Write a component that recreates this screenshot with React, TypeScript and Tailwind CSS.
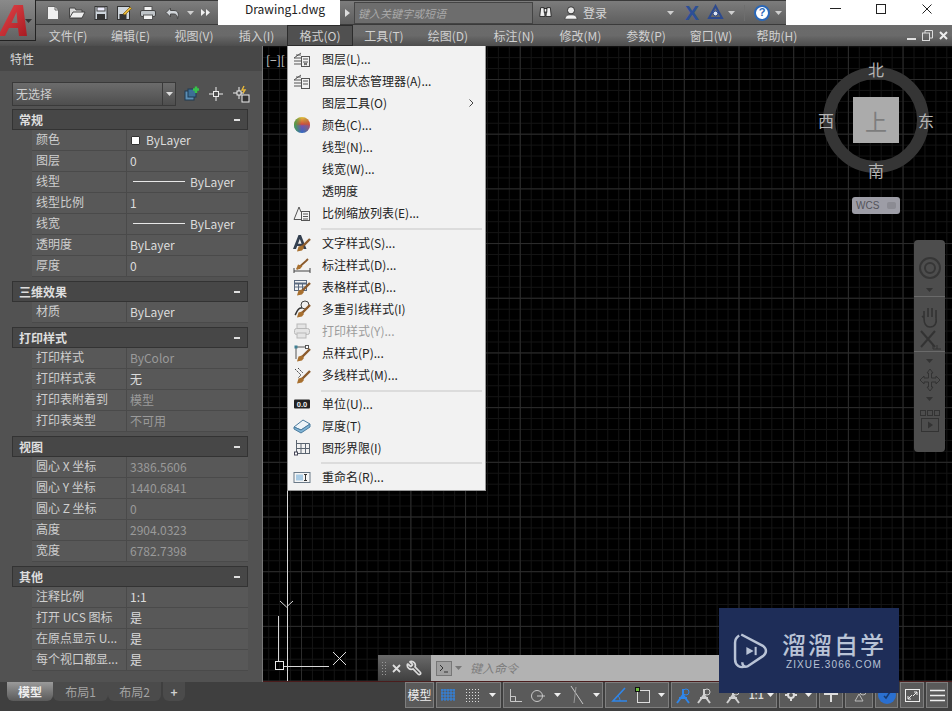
import React from "react";
import { Wrench } from "lucide-react";

const FONT = '"Noto Sans CJK SC", "Liberation Sans", sans-serif';

type Row = { l: string; v?: string; kind?: "color" | "line"; dim?: boolean };
const sections: { t: string; rows: Row[] }[] = [
  { t: "常规", rows: [
    { l: "颜色", v: "ByLayer", kind: "color" }, { l: "图层", v: "0" }, { l: "线型", v: "ByLayer", kind: "line" },
    { l: "线型比例", v: "1" }, { l: "线宽", v: "ByLayer", kind: "line" }, { l: "透明度", v: "ByLayer" }, { l: "厚度", v: "0" } ] },
  { t: "三维效果", rows: [{ l: "材质", v: "ByLayer" }] },
  { t: "打印样式", rows: [
    { l: "打印样式", v: "ByColor", dim: true }, { l: "打印样式表", v: "无" }, { l: "打印表附着到", v: "模型", dim: true }, { l: "打印表类型", v: "不可用", dim: true } ] },
  { t: "视图", rows: [
    { l: "圆心 X 坐标", v: "3386.5606", dim: true }, { l: "圆心 Y 坐标", v: "1440.6841", dim: true }, { l: "圆心 Z 坐标", v: "0", dim: true },
    { l: "高度", v: "2904.0323", dim: true }, { l: "宽度", v: "6782.7398", dim: true } ] },
  { t: "其他", rows: [
    { l: "注释比例", v: "1:1" }, { l: "打开 UCS 图标", v: "是" }, { l: "在原点显示 U...", v: "是" }, { l: "每个视口都显...", v: "是" } ] },
];

const menuNames = [
  ["文件(F)", 62], ["编辑(E)", 63], ["视图(V)", 64], ["插入(I)", 61], ["格式(O)", 66], ["工具(T)", 62],
  ["绘图(D)", 66], ["标注(N)", 66], ["修改(M)", 67], ["参数(P)", 64], ["窗口(W)", 66], ["帮助(H)", 66],
] as const;

const S = ({ children, w = 18, h = 18, vb = "0 0 18 18" }: { children: React.ReactNode; w?: number; h?: number; vb?: string }) => (
  <svg width={w} height={h} viewBox={vb} fill="none" className="shrink-0">{children}</svg>
);

const Brush = () => (
  <g>
    <path d="M9 13 L17 5" stroke="#8a5a2c" strokeWidth="2.4" />
    <path d="M4 17.5 L5.5 12.5 L9 11.5 L11 14 L9 16.5 Z" fill="#a8702f" />
  </g>
);

const LayerIc = ({ lines }: { lines?: boolean }) => (
  <S>
    <g stroke="#555" strokeWidth="1">
      <path d="M1 8 L8 3 M1 8 H8 M1 11 H8 M1 14 H8 M3 5 H8" />
      <rect x="8.5" y="6.5" width="8" height="10" fill="#f2f2f2" />
      <path d="M10 9 H15 M10 12 H15" stroke="#555" />
      {!lines && <path d="M11 13 L14 15 M14 13 L11 15" />}
    </g>
  </S>
);

type MenuIcon = React.ReactNode;
const icons: Record<string, MenuIcon> = {
  layer: <LayerIc />,
  state: <LayerIc lines />,
  color: (
    <S>
      <defs>
        <linearGradient id="cg" x1="0" x2="0" y1="0" y2="1">
          <stop offset="0" stopColor="#e8c23a" /><stop offset="0.45" stopColor="#d8473c" /><stop offset="0.55" stopColor="#7a4fb0" /><stop offset="1" stopColor="#3166c8" />
        </linearGradient>
        <linearGradient id="cg2" x1="0" x2="1" y1="0" y2="0">
          <stop offset="0" stopColor="#3fa64b" /><stop offset="0.5" stopColor="#3fa64b" stopOpacity="0" /><stop offset="1" stopColor="#d8473c" stopOpacity="0.6" />
        </linearGradient>
      </defs>
      <circle cx="9" cy="9" r="8" fill="url(#cg)" />
      <circle cx="9" cy="9" r="8" fill="url(#cg2)" />
    </S>
  ),
  scale: (
    <S>
      <g stroke="#555">
        <path d="M1 15.5 L6 3 L8 8 M1 15.5 H8" />
        <rect x="8.5" y="7.5" width="8" height="9" fill="#f4f4f4" />
        <path d="M10 10 H15 M10 12.5 H15 M10 15 H15" />
      </g>
    </S>
  ),
  text: (
    <S>
      <path d="M0 15 L5.5 1 H8 L13.5 15 H10.5 L9.4 12 H4.2 L3 15 Z M5 9.8 H8.6 L6.8 5 Z" fill="#333f4f" fillRule="evenodd" />
      <Brush />
    </S>
  ),
  dim: (
    <S>
      <path d="M1 12 V17 M17 12 V17 M1 15 H17" stroke="#444" />
      <path d="M4 13 L13 5 L15 3" stroke="#8a5a2c" strokeWidth="1.8" />
      <path d="M3 13.5 L5 8.5 L9.5 10 L7 13 Z" fill="#a8702f" />
    </S>
  ),
  table: (
    <S>
      <rect x="1.5" y="2.5" width="12" height="10" fill="#f3f3f3" stroke="#5a6a80" />
      <path d="M1.5 5.5 H13.5" stroke="#5a6a80" strokeWidth="2" />
      <path d="M5.5 5 V12.5 M9.5 5 V12.5 M1.5 9 H13.5" stroke="#5a6a80" />
      <Brush />
    </S>
  ),
  mleader: (
    <S>
      <circle cx="12" cy="5" r="4" fill="#f0f0f0" stroke="#444" />
      <path d="M9 8 C4 7 4 13 2 15" stroke="#333" strokeWidth="1.5" />
      <Brush />
    </S>
  ),
  plot: (
    <S>
      <g stroke="#b8b8b8" fill="#e4e4e4">
        <rect x="4" y="2" width="9" height="5" />
        <rect x="1.5" y="6.5" width="15" height="6" rx="2" />
        <rect x="4" y="11" width="9" height="5" />
      </g>
    </S>
  ),
  point: (
    <S>
      <path d="M3 3 H14 M3 3 V15" stroke="#555" />
      <rect x="1.5" y="1.5" width="3" height="3" fill="#3e7f92" />
      <rect x="12.5" y="1.5" width="3" height="3" fill="#fff" stroke="#555" />
      <Brush />
    </S>
  ),
  mline: (
    <S>
      <path d="M2 3 L8 9 L5 12 M5 2 L10 7" stroke="#444" strokeDasharray="2 1" />
      <Brush />
    </S>
  ),
  units: (
    <S>
      <rect x="1" y="4.5" width="16" height="9" rx="1" fill="#222" />
      <text x="9" y="12" textAnchor="middle" fontSize="7.5" fill="#eee" fontFamily="Liberation Sans" fontWeight="700">0.0</text>
    </S>
  ),
  thick: (
    <S>
      <path d="M1 10 L10 3 L17 7 L8 13 Z" fill="#eef4f8" stroke="#4d7c9e" />
      <path d="M1 10 V12 L8 16 L17 10 V7 L8 13 Z" fill="#7fb4d6" stroke="#4d7c9e" />
    </S>
  ),
  limits: (
    <S>
      <path d="M3.5 1 V16 M3 14.5 H17 M3.5 4.5 H16.5 V14.5 M8 4.5 V14.5 M12.5 4.5 V14.5 M3.5 9.5 H16.5" stroke="#5a6470" />
      <rect x="1.5" y="13" width="3" height="3" fill="#fff" stroke="#445" />
    </S>
  ),
  rename: (
    <S>
      <rect x="1" y="4.5" width="16" height="10" fill="#f5f5f5" stroke="#6b7a88" />
      <rect x="3" y="6.5" width="7" height="6" fill="#a9cbe4" />
      <path d="M11 6.5 H14 M12.5 6.5 V12.5 M11 12.5 H14" stroke="#333" />
    </S>
  ),
};

type Mi = { t: string; ic?: string; dis?: boolean; arrow?: boolean };
const menuGroups: { items: Mi[]; h: string }[] = [
  { h: "pt-[2px] pb-[4px]", items: [
    { t: "图层(L)...", ic: "layer" }, { t: "图层状态管理器(A)...", ic: "state" }, { t: "图层工具(O)", arrow: true }, { t: "颜色(C)...", ic: "color" },
    { t: "线型(N)..." }, { t: "线宽(W)..." }, { t: "透明度" }, { t: "比例缩放列表(E)...", ic: "scale" } ] },
  { h: "pt-[4px] pb-[4px]", items: [
    { t: "文字样式(S)...", ic: "text" }, { t: "标注样式(D)...", ic: "dim" }, { t: "表格样式(B)...", ic: "table" }, { t: "多重引线样式(I)", ic: "mleader" },
    { t: "打印样式(Y)...", ic: "plot", dis: true }, { t: "点样式(P)...", ic: "point" }, { t: "多线样式(M)...", ic: "mline" } ] },
  { h: "pt-[3px] pb-[3px]", items: [{ t: "单位(U)...", ic: "units" }, { t: "厚度(T)", ic: "thick" }, { t: "图形界限(I)", ic: "limits" }] },
  { h: "pt-[4px] pb-[2px]", items: [{ t: "重命名(R)...", ic: "rename" }] },
];

const Caret = ({ c = "#d8d8d8" }: { c?: string }) => (
  <svg width="7" height="4" viewBox="0 0 7 4" className="shrink-0"><path d="M0 0 H7 L3.5 4 Z" fill={c} /></svg>
);

function QuickBar() {
  return (
    <div className="flex h-[25px] w-[183px] shrink-0 items-center gap-[7px] border-y border-[#3a3a3a] bg-gradient-to-b from-[#7e7e7e] to-[#5f5f5f] pl-[10px]">
      <S w={16} h={16} vb="0 0 16 16"><path d="M2.5 1.5 H10 L13.5 5 V14.5 H2.5 Z" fill="#f0f0f0" stroke="#666" /><path d="M10 1.5 V5 H13.5" stroke="#666" /></S>
      <S w={18} h={16} vb="0 0 18 16"><path d="M1.5 3 H7 L8 5 H14 V13 H1.5 Z" fill="#d8d8d8" stroke="#444" /><path d="M1.5 13 L5 7 H17 L14 13 Z" fill="#eee" stroke="#444" /></S>
      <S w={16} h={16} vb="0 0 16 16"><rect x="2" y="1.5" width="12" height="13" fill="#cfd6dd" stroke="#333" /><rect x="4" y="2" width="8" height="4" fill="#eef" stroke="#444" /><rect x="4" y="9" width="8" height="5.5" fill="#333" /></S>
      <S w={16} h={16} vb="0 0 16 16"><rect x="1.5" y="1.5" width="12" height="13" fill="#cfd6dd" stroke="#333" /><rect x="3.5" y="9" width="7" height="5" fill="#333" /><path d="M7 9 L14 2 L15.5 3.5 L9 10 Z" fill="#e8b83a" stroke="#7a5a10" strokeWidth="0.7" /></S>
      <S w={18} h={16} vb="0 0 18 16"><rect x="5" y="1.5" width="8" height="4" fill="#f4f4f4" stroke="#555" /><rect x="1.5" y="5.5" width="15" height="6" rx="1.5" fill="#bfc4c8" stroke="#444" /><rect x="4.5" y="10" width="9" height="4.5" fill="#f4f4f4" stroke="#555" /></S>
      <S w={16} h={14} vb="0 0 16 14"><path d="M6.5 2 L2 6.5 L6.5 11 V8 H10 C12.5 8 13.5 10 13.5 13 C15.5 8 14 4.5 10 4.5 H6.5 Z" fill="#d2d6da" stroke="#4a4a4a" /></S>
      <Caret c="#cfcfcf" />
      <S w={9} h={7} vb="0 0 9 7"><path d="M0 0 L4 3.5 L0 7 Z M5 0 L9 3.5 L5 7 Z" fill="#f0f0f0" /></S>
    </div>
  );
}

function TitleBar() {
  return (
    <div className="flex h-[25px] bg-white">
      <div className="w-[35px] shrink-0" />
      <QuickBar />
      <div className="w-[122px] shrink-0 bg-white pl-[27px] text-[12px] leading-[18px] text-[#222]" style={{ fontFamily: FONT }}>
        Drawing1.dwg
      </div>
      <div className="flex h-[25px] w-[446px] shrink-0 items-center border-y border-[#3a3a3a] bg-gradient-to-b from-[#7c7c7c] to-[#5e5e5e]">
        <div className="flex h-full w-[14px] items-center justify-center">
          <svg width="5" height="8" viewBox="0 0 5 8"><path d="M0 0 L5 4 L0 8 Z" fill="#ddd" /></svg>
        </div>
        <div className="h-[22px] w-[179px] border border-[#444] bg-[#6d6d6d] pl-[3px] text-[11px] italic leading-[20px] text-[#a9a9a9]">键入关键字或短语</div>
        <div className="ml-[5px] flex flex-1 items-center">
          <S w={15} h={17} vb="0 0 17 17"><g fill="#efefef" stroke="#222" strokeWidth="1"><path d="M3 3 H7 L8 13 H2 Z" /><path d="M10 3 H14 L15 13 H9 Z" /><rect x="7" y="4" width="3" height="4" /></g></S>
          <span className="ml-[10px]"><S w={16} h={18} vb="0 0 18 18"><circle cx="9" cy="6" r="4" fill="#e8e8e8" stroke="#222" /><path d="M2 16 C3 11 6 11 9 11 C12 11 15 11 16 16 Z" fill="#f3f3f3" stroke="#444" /></S></span>
          <span className="ml-[4px] text-[12px] text-[#d6d6d6]" style={{ fontFamily: FONT }}>登录</span>
          <span className="ml-[60px]"><Caret c="#cfcfcf" /></span>
          <span className="ml-[11px] text-[21px] font-black leading-none text-[#2c4f96]" style={{ fontFamily: '"Liberation Sans", sans-serif' }}>X</span>
          <span className="ml-[8px]"><S w={17} h={17} vb="0 0 17 17"><path d="M8.5 2 L15 14 H2 Z" stroke="#2d4a8e" strokeWidth="2" /><circle cx="8.5" cy="9.5" r="2.4" fill="#dfe6f2" stroke="#2d4a8e" /></S></span>
          <span className="ml-[4px]"><Caret c="#cfcfcf" /></span>
          <span className="ml-[9px] h-[16px] w-px bg-[#6e6e6e]" />
          <span className="ml-[9px] flex h-[16px] w-[16px] items-center justify-center rounded-full border-2 border-[#2a67b8] bg-white text-[11px] font-bold leading-none text-[#2a67b8]" style={{ fontFamily: '"Liberation Sans", sans-serif' }}>?</span>
          <span className="ml-[5px]"><Caret c="#cfcfcf" /></span>
        </div>
      </div>
      <div className="flex flex-1 items-center justify-end bg-white pb-[8px] pr-[20px]">
        <span className="mr-[35px] h-px w-[11px] bg-[#222]" />
        <span className="mr-[36px] h-[10px] w-[10px] border border-[#222]" />
        <svg width="10" height="10" viewBox="0 0 10 10"><path d="M0.5 0.5 L9.5 9.5 M9.5 0.5 L0.5 9.5" stroke="#222" /></svg>
      </div>
    </div>
  );
}

function MenuBar() {
  return (
    <div className="relative flex h-[21px] bg-gradient-to-b from-[#6b6b6b] via-[#6a6a6a] to-[#4d4d4d] text-[12px] text-[#d0d0d0]" style={{ fontFamily: FONT }}>
      <div className="w-[37px] shrink-0" />
      {menuNames.map(([t, w], i) => (
        <div key={i} style={{ width: w }} className={"flex h-full shrink-0 items-center justify-center " + (t === "格式(O)" ? "border border-[#2c2c2c] bg-[#505050]" : "")}>{t}</div>
      ))}
      <div className="ml-auto flex items-center gap-[6px] pr-[4px]">
        <span className="mt-[7px] h-[2px] w-[9px] bg-[#e0e0e0]" />
        <S w={11} h={11} vb="0 0 11 11"><rect x="0.5" y="3" width="7" height="7.5" stroke="#ddd" /><path d="M3 3 V0.5 H10.5 V8 H7.5" stroke="#ddd" /></S>
        <svg width="9" height="9" viewBox="0 0 9 9"><path d="M1 1 L8 8 M8 1 L1 8" stroke="#eee" strokeWidth="2" /></svg>
      </div>
    </div>
  );
}

function PropRow({ r }: { r: Row }) {
  const color = r.dim ? "text-[#9a9a9a]" : "text-[#dcdcdc]";
  return (
    <div className="flex h-[21px] text-[12px] leading-[20px]">
      <div className="w-[20px] shrink-0" />
      <div className="w-[95px] shrink-0 truncate border-b border-r border-[#4a4a4a] bg-[#585858] pl-[4px] text-[#cfcfcf]">
        <span className="relative -top-[1px]">{r.l}</span>
      </div>
      <div className={"flex min-w-0 flex-1 items-center border-b border-[#4a4a4a] bg-[#585858] pl-[3px] " + color}>
        {r.kind === "color" && <span className="ml-[1px] mr-[6px] h-[9px] w-[9px] rounded-[1px] border border-[#333] bg-white" />}
        {r.kind === "line" && <span className="ml-[3px] mr-[5px] mt-[-2px] h-px w-[52px] bg-[#e8e8e8]" />}
        <span>{r.v}</span>
      </div>
    </div>
  );
}

function Panel() {
  return (
    <div className="flex h-full w-[262px] shrink-0 flex-col bg-[#525252]" style={{ fontFamily: FONT }}>
      <div className="flex h-[25px] items-center bg-[#474747] pl-[10px] text-[12px] text-[#d8d8d8]">特性</div>
      <div className="flex h-[38px] items-center pl-[12px] pt-[7px]">
        <div className="flex h-[24px] w-[164px] items-center border border-[#3a3a3a] bg-gradient-to-b from-[#6c6c6c] to-[#4e4e4e] pl-[3px] text-[12px] text-[#cfcfcf]">
          <span className="flex-1">无选择</span>
          <span className="flex h-full w-[13px] items-center justify-center border-l border-[#3a3a3a]"><Caret c="#ddd" /></span>
        </div>
        <span className="ml-[8px]"><S w={16} h={16} vb="0 0 16 16"><rect x="1" y="5" width="9" height="9" fill="#5d8fb5" stroke="#1f3a52" /><rect x="4" y="3" width="8" height="8" fill="#3c6f96" stroke="#1f3a52" /><path d="M12 0.5 V7 M9 3.5 H15" stroke="#37c24a" strokeWidth="2.5" /></S></span>
        <span className="ml-[8px]"><S w={16} h={16} vb="0 0 16 16"><rect x="5.5" y="5.5" width="5" height="5" stroke="#eee" /><path d="M8 1 V5 M8 11 V15 M1 8 H5 M11 8 H15" stroke="#eee" /></S></span>
        <span className="ml-[8px]"><S w={18} h={18} vb="0 0 18 18"><rect x="5" y="6" width="4" height="4" stroke="#eee" /><path d="M7 2 V6 M7 10 V14 M1 8 H5 M9 8 H12" stroke="#eee" /><path d="M12 1 L10 5 H13 L11 8" stroke="#e8b83a" strokeWidth="1.4" /><rect x="10" y="10" width="7" height="7" fill="#333" stroke="#eee" /></S></span>
      </div>
      <div className="flex flex-col gap-[4px] pl-[12px] pr-[14px]">
        {sections.map((s) => (
          <div key={s.t}>
            <div className="flex h-[21px] items-center border border-[#333] bg-[#474747] pl-[6px] pr-[7px] text-[12px] font-bold text-[#dedede]">
              <span className="flex-1">{s.t}</span>
              <span className="h-[2px] w-[6px] bg-[#e0e0e0]" />
            </div>
            {s.rows.map((r) => <PropRow key={r.l} r={r} />)}
          </div>
        ))}
      </div>
    </div>
  );
}

function FormatMenu() {
  return (
    <div className="absolute left-[24px] top-0 z-20 w-[199px] border-x border-b border-[#999] bg-[#f2f2f2] text-[12px] text-[#222]" style={{ fontFamily: FONT }}>
      {menuGroups.map((g, i) => (
        <div key={i} className={g.h + " " + (i > 0 ? "relative" : "")}>
          {i > 0 && <div className="absolute left-[33px] right-[3px] top-0 h-[2px] bg-[#dcdcdc]" />}
          {g.items.map((m) => (
            <div key={m.t} className={"flex h-[22px] items-center " + (m.dis ? "text-[#9c9c9c]" : "")}>
              <span className="flex w-[34px] shrink-0 items-center pl-[5px]">{m.ic ? icons[m.ic] : null}</span>
              <span className="flex-1">{m.t}</span>
              {m.arrow && (
                <svg width="5" height="8" viewBox="0 0 5 8" className="mr-[11px]"><path d="M0.5 0.5 L4 4 L0.5 7.5" stroke="#444" fill="none" /></svg>
              )}
            </div>
          ))}
        </div>
      ))}
    </div>
  );
}

function ViewCube() {
  return (
    <div className="absolute left-[551px] top-[11px] z-10 flex w-[124px] flex-col items-center text-[16px] text-[#b4b4b4]" style={{ fontFamily: FONT }}>
      <div className="grid h-[125px] w-[124px] grid-cols-[24px_1fr_24px] grid-rows-[24px_1fr_24px] items-center justify-items-center">
        <div className="col-span-3 col-start-1 row-span-3 row-start-1 flex h-[106px] w-[106px] items-center justify-center rounded-full border-[12px] border-[#353535]">
          <div className="flex h-[46px] w-[46px] items-center justify-center bg-[#ababab] text-[22px] leading-none text-[#7d7d7d]">上</div>
        </div>
        <span className="z-10 col-start-2 row-start-1 leading-none">北</span>
        <span className="z-10 col-start-1 row-start-2 leading-none">西</span>
        <span className="z-10 col-start-3 row-start-2 leading-none">东</span>
        <span className="z-10 col-start-2 row-start-3 leading-none">南</span>
      </div>
      <div className="mt-[15px] flex h-[17px] w-[48px] items-center justify-between rounded-[3px] bg-[#9d9da6] px-[4px] text-[10px] text-[#53535a]" style={{ fontFamily: '"Liberation Sans", sans-serif' }}>
        WCS<span className="h-[7px] w-[9px] rounded-[2px] bg-[#8b8b93]" />
      </div>
    </div>
  );
}

function NavBar() {
  return (
    <div className="absolute right-[7px] top-[194px] z-10 flex h-[212px] w-[31px] flex-col items-center rounded-[4px] bg-[#4d4d4d] pt-[16px]">
      <S w={24} h={24} vb="0 0 24 24"><circle cx="12" cy="12" r="10" stroke="#363636" strokeWidth="2" /><circle cx="12" cy="12" r="5" stroke="#363636" strokeWidth="2" /></S>
      <span className="mt-[8px] flex"><Caret c="#333" /></span>
      <div className="mt-[4px] h-px w-full bg-[#6a6a6a]" />
      <span className="mt-[8px] flex"><S w={22} h={24} vb="0 0 22 24"><path d="M5 13 V6 M9 12 V3 M13 12 V3 M17 13 V5 M5 13 L3 11 M5 13 C5 20 8 22 11 22 C16 22 18 18 17 13" stroke="#333" strokeWidth="1.6" /></S></span>
      <span className="mt-[1px] flex"><S w={26} h={20} vb="0 0 26 20"><path d="M4 1 L18 17 M18 1 L4 17" stroke="#333" strokeWidth="2" /><path d="M16 15 V19 H24 M20 15 V19" stroke="#333" /></S></span>
      <div className="mt-[1px] h-px w-full bg-[#6a6a6a]" />
      <span className="mt-[7px] flex"><Caret c="#333" /></span>
      <span className="mt-[4px] flex"><S w={22} h={26} vb="0 0 22 26"><path d="M11 2 L14 6 H12.5 V11 H17 V9 L21 13 L17 17 V15 H12.5 V20 H14 L11 24 L8 20 H9.5 V15 H5 V17 L1 13 L5 9 V11 H9.5 V6 H8 Z" stroke="#333" /></S></span>
      <span className="mt-[4px] flex"><Caret c="#333" /></span>
      <div className="mt-[9px] flex gap-[1px]">
        <span className="h-[6px] w-[6px] border border-[#333]" /><span className="h-[6px] w-[6px] border border-[#333]" /><span className="h-[6px] w-[6px] border border-[#333]" />
      </div>
      <span className="mt-[2px] flex"><S w={18} h={14} vb="0 0 18 14"><rect x="0.5" y="0.5" width="17" height="13" stroke="#333" /><path d="M7 3.5 L12 7 L7 10.5 Z" fill="#333" /></S></span>
    </div>
  );
}

function CommandLine() {
  return (
    <div className="absolute left-[115px] top-[609px] z-10 flex h-[26px] w-[343px]">
      <div className="flex w-[53px] shrink-0 items-center bg-gradient-to-b from-[#6a6a6a] to-[#3f3f3f] pl-[3px]">
        <span className="mr-[5px] h-[15px] w-[6px] bg-[radial-gradient(#999_1px,transparent_1px)] bg-[length:3px_3px]" />
        <svg width="9" height="9" viewBox="0 0 9 9"><path d="M1 1 L8 8 M8 1 L1 8" stroke="#ddd" strokeWidth="1.8" /></svg>
        <Wrench size={16} strokeWidth={2.6} color="#dcdcdc" className="ml-[5px] -scale-x-100" />
      </div>
      <div className="flex flex-1 items-center bg-[#b2b2b2] pl-[5px] text-[12px] italic text-[#7d7d7d]">
        <span className="flex h-[15px] w-[16px] items-center justify-center border border-[#777] bg-[#a0a0a0]"><S w={10} h={9} vb="0 0 10 9"><path d="M1 1 L4 4 L1 7 M5 8 H9" stroke="#333" /></S></span>
        <span className="ml-[3px]"><Caret c="#777" /></span>
        <span className="ml-[8px]">键入命令</span>
      </div>
    </div>
  );
}

function Watermark() {
  return (
    <div className="absolute bottom-[18px] right-[53px] z-30 flex h-[85px] w-[180px] items-center bg-[#1e2d58] pl-[14px]">
      <S w={35} h={40} vb="0 0 34 38">
        <path d="M6 4 C3 6 2 8 2 11 V27 C2 33 7 36 12 34" stroke="#b9c3d6" strokeWidth="2.4" />
        <path d="M8 3 L29 14 C33 17 33 21 29 24 L14 34 C11 35 9 33 9 30" stroke="#b9c3d6" strokeWidth="2.4" />
        <path d="M13 15 L20 19 L13 23 Z" fill="#b9c3d6" />
        <rect x="21" y="15" width="2" height="8" fill="#b9c3d6" />
      </S>
      <div className="ml-[14px] flex flex-col items-center text-[#b9c3d6]">
        <span className="text-[24px] font-medium leading-[28px] tracking-[2px]" style={{ fontFamily: FONT }}>溜溜自学</span>
        <span className="mt-[1px] text-[10px] leading-[12px] tracking-[1.1px]" style={{ fontFamily: '"Liberation Sans", sans-serif' }}>ZIXUE.3066.COM</span>
      </div>
    </div>
  );
}

function Canvas() {
  return (
    <div className="relative min-w-0 flex-1 border-l border-[#777] bg-black bg-[linear-gradient(#2c2c2c_1px,transparent_1px),linear-gradient(90deg,#2c2c2c_1px,transparent_1px),linear-gradient(#141414_1px,transparent_1px),linear-gradient(90deg,#141414_1px,transparent_1px)] bg-[length:54.7px_54.7px,54.7px_54.7px,10.94px_10.94px,10.94px_10.94px] bg-[position:38px_33px,38px_33px,38px_33px,38px_33px]">
      <span className="absolute left-[3px] top-[5px] text-[12px] text-[#cfcfcf]" style={{ fontFamily: FONT }}>[−][</span>
      <span className="absolute bottom-0 left-[24px] top-0 w-px bg-[#d8d8d8]" />
      <FormatMenu />
      <ViewCube />
      <NavBar />
      <CommandLine />
      <svg width="80" height="80" viewBox="0 0 80 80" fill="none" className="absolute left-[7px] top-[552px]">
        <path d="M8.5 18 V63 M14 68.5 H59" stroke="#d8d8d8" />
        <rect x="5.5" y="63.5" width="8" height="8" stroke="#e8e8e8" />
        <path d="M10 3 L16.5 9 L23 3" stroke="#d8d8d8" />
        <path d="M63 54 L76 67 M76 54 L63 67" stroke="#e0e0e0" />
      </svg>
      <span className="absolute bottom-0 left-0 right-0 h-px bg-[#4a1c1c]" />
    </div>
  );
}

const Bx = ({ children, cls = "" }: { children: React.ReactNode; cls?: string }) => (
  <div className={"flex h-[26px] shrink-0 items-center border border-[#7e7e7e] bg-[#5a5a5a] " + cls}>{children}</div>
);

const Person = ({ c }: { c: string }) => (
  <svg width="17" height="17" viewBox="0 0 17 17" fill="none" className="shrink-0"><circle cx="11" cy="5" r="3" stroke={c} /><path d="M2 16 L8 8 L14 16 M8 8 V2 M4 11 H12" stroke={c} strokeWidth="2" /></svg>
);

function StatusBar() {
  return (
    <div className="relative flex h-[29px] bg-[#3f3f3f]" style={{ fontFamily: FONT }}>
      <div className="flex h-[19px] w-[262px] shrink-0 items-start pl-[7px] text-[12px]">
        <div className="flex h-[19px] w-[46px] items-center justify-center rounded-b-[6px] bg-gradient-to-b from-[#9a9a9a] to-[#5a5a5a] font-bold text-[#eee]">模型</div>
        <div className="flex h-[19px] w-[55px] items-center justify-center rounded-b-[6px] bg-[#4b4b4b] text-[#a3a3a3]">布局1</div>
        <div className="flex h-[19px] w-[53px] items-center justify-center rounded-b-[6px] bg-[#4b4b4b] text-[#a3a3a3]">布局2</div>
        <div className="ml-[2px] flex h-[19px] w-[22px] items-center justify-center rounded-b-[6px] bg-[#4b4b4b] font-bold text-[#d0d0d0]">+</div>
      </div>
      <div className="ml-auto flex items-start gap-[2px] pr-[4px]">
        <Bx cls="w-[29px] justify-center text-[12px] text-[#eee]">模型</Bx>
        <Bx cls="w-[65px] gap-[10px] pl-[4px]">
          <svg width="14" height="14" viewBox="0 0 14 14" fill="none"><path d="M1 1 V13 M4 1 V13 M7 1 V13 M10 1 V13 M13 1 V13 M0 2 H14 M0 5 H14 M0 8 H14 M0 11 H14" stroke="#2f86ea" /></svg>
          <svg width="14" height="14" viewBox="0 0 14 14" fill="none"><path d="M1 1.5 H14 M1 4.5 H14 M1 7.5 H14 M1 10.5 H14 M1 13.5 H14" stroke="#ddd" strokeDasharray="1 2" /></svg>
          <Caret c="#eee" />
        </Bx>
        <Bx cls="w-[100px] gap-[8px] pl-[4px]">
          <svg width="14" height="14" viewBox="0 0 14 14" fill="none"><path d="M2.5 1 V13.5 H14 M2.5 8.5 H7.5 V13.5" stroke="#c8c8c8" /></svg>
          <svg width="16" height="16" viewBox="0 0 16 16" fill="none"><circle cx="7" cy="9" r="5.5" stroke="#c8c8c8" /><path d="M7 9 H15" stroke="#c8c8c8" /></svg>
          <Caret c="#eee" />
          <svg width="16" height="18" viewBox="0 0 16 18" fill="none"><path d="M2 0 L14 18" stroke="#c8c8c8" /><path d="M7 1 L5 17" stroke="#999" /></svg>
          <Caret c="#eee" />
        </Bx>
        <Bx cls="w-[64px] gap-[8px] pl-[5px]">
          <svg width="16" height="16" viewBox="0 0 16 16" fill="none"><path d="M14 1 L2 14 H16" stroke="#2f86ea" strokeWidth="1.6" /><path d="M9 14 C9 11 8 10 7 9" stroke="#2f86ea" /></svg>
          <svg width="15" height="16" viewBox="0 0 15 16" fill="none"><rect x="2.5" y="3.5" width="12" height="12" stroke="#ddd" /><rect x="0.5" y="0.5" width="4" height="4" fill="#6ebb3e" stroke="#111" /></svg>
          <Caret c="#eee" />
        </Bx>
        <Bx cls="w-[106px] gap-[4px] pl-[3px]">
          <Person c="#2f86ea" />
          <Person c="#d0d0d0" />
          <span className="ml-[8px] flex"><Person c="#d0d0d0" /></span>
          <span className="ml-[3px] text-[10px] font-bold text-[#ddd]" style={{ fontFamily: '"Liberation Sans", sans-serif' }}>1:1</span>
          <Caret c="#eee" />
        </Bx>
        <Bx cls="w-[38px] justify-center gap-[8px]">
          <svg width="12" height="12" viewBox="0 0 12 12" fill="none"><circle cx="6" cy="6" r="3" stroke="#ddd" strokeWidth="2" /><path d="M6 0 V3 M6 9 V12 M0 6 H3 M9 6 H12" stroke="#ddd" strokeWidth="2" /></svg>
          <Caret c="#eee" />
        </Bx>
        <Bx cls="w-[24px] justify-center"><svg width="14" height="14" viewBox="0 0 14 14" fill="none"><path d="M7 0 V14 M0 6 H14" stroke="#ddd" strokeWidth="2" /></svg></Bx>
        <Bx cls="w-[28px] justify-center"><svg width="16" height="14" viewBox="0 0 16 14" fill="none"><path d="M4 13 L8 6 L12 13 Z" stroke="#bbb" /><circle cx="12" cy="4" r="3" stroke="#bbb" /></svg></Bx>
        <Bx cls="w-[23px] justify-center">
          <span className="flex h-[18px] w-[18px] items-center justify-center rounded-full bg-[#2a6fd0]">
            <svg width="10" height="10" viewBox="0 0 10 10" fill="none"><path d="M2 6 L4 8 L8 2" stroke="#173a70" strokeWidth="1.5" /></svg>
          </span>
        </Bx>
        <Bx cls="w-[24px] justify-center"><svg width="15" height="13" viewBox="0 0 15 13" fill="none"><rect x="0.5" y="0.5" width="14" height="12" stroke="#eee" /><path d="M3 10 L7 6 M3 7 V10 H6 M12 3 L8 7 M9 3 H12 V6" stroke="#eee" /></svg></Bx>
        <Bx cls="w-[22px] justify-center"><svg width="15" height="13" viewBox="0 0 15 13" fill="none"><path d="M0 1.5 H15 M0 6.5 H15 M0 11.5 H15" stroke="#eee" strokeWidth="1.6" /></svg></Bx>
      </div>
      <Watermark />
    </div>
  );
}

export default function App() {
  return (
    <div className="relative h-[711px] w-[952px] overflow-hidden bg-[#3f3f3f]" style={{ fontFamily: FONT }}>
      <TitleBar />
      <MenuBar />
      <div className="flex h-[636px]">
        <Panel />
        <Canvas />
      </div>
      <StatusBar />
      {/* application button */}
      <div className="absolute left-0 top-0 z-30 h-[41px] w-[36px] border-b border-r border-[#222] bg-gradient-to-b from-[#8a8a8a] to-[#626262]">
        <svg width="30" height="38" viewBox="0 0 30 38" className="absolute left-0 top-0">
          <defs>
            <linearGradient id="ag" x1="0" x2="1" y1="0" y2="1">
              <stop offset="0" stopColor="#e6454a" /><stop offset="1" stopColor="#a81c22" />
            </linearGradient>
          </defs>
          <path d="M-2 36 L14 5 H23 L27 36 H19 L18 28 H9 L5 36 Z M11.5 23 H17.5 L16.5 12 Z" fill="url(#ag)" fillRule="evenodd" />
        </svg>
        <span className="absolute right-[3px] top-[19px] flex"><Caret c="#333" /></span>
      </div>
    </div>
  );
}
